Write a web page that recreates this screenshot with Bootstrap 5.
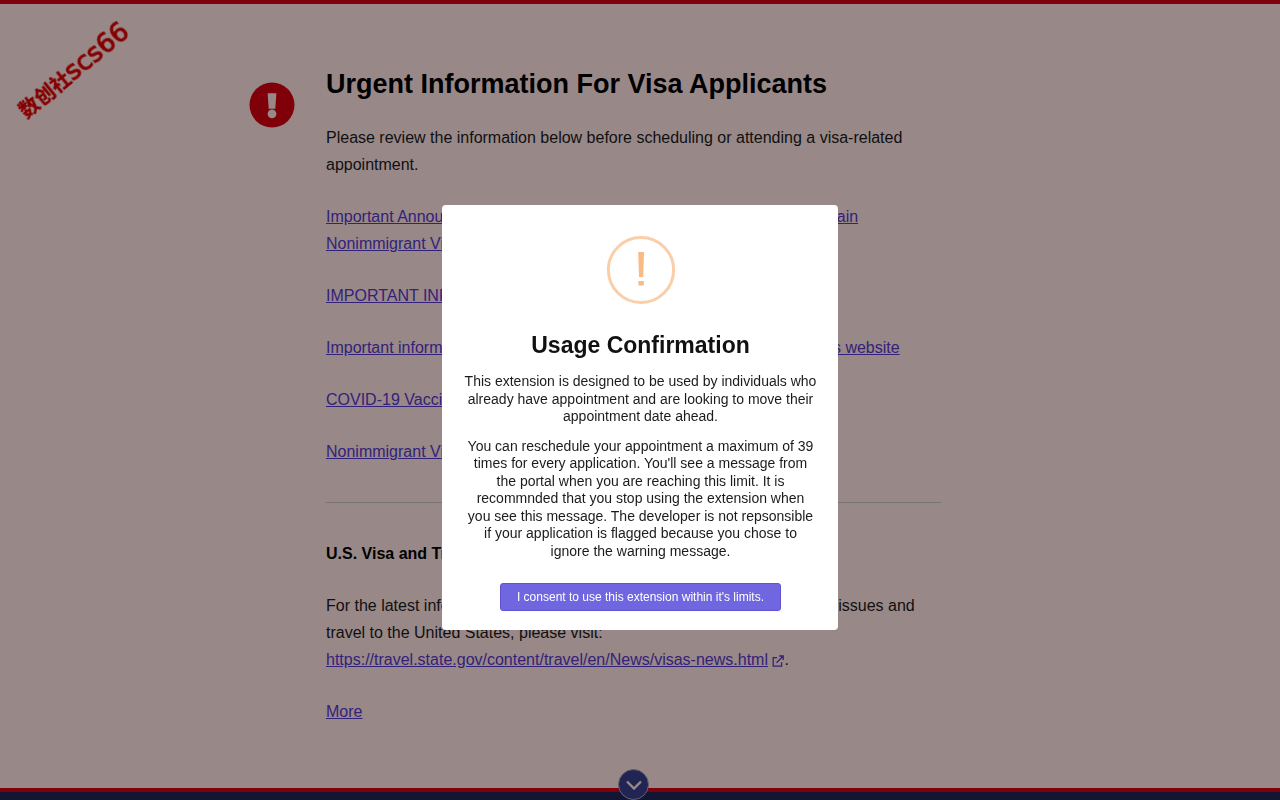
<!DOCTYPE html>
<html lang="en">
<head>
<meta charset="utf-8">
<meta name="viewport" content="width=device-width, initial-scale=1">
<title>Urgent Information For Visa Applicants</title>
<link href="https://cdn.jsdelivr.net/npm/bootstrap@5.3.0/dist/css/bootstrap.min.css" rel="stylesheet">
<style>
  body { font-family: "Liberation Sans", Arial, sans-serif; font-size: 16px; line-height: 27px; color: #1b1b1b; }
  .alert-panel { background: #ffe3e3; border-top: 4px solid #d50012; border-bottom: 4px solid #d50012; padding: 60px 13px 0 0; }
  .alert-inner { display: grid; grid-template-columns: 46px minmax(0, 615px); column-gap: 31px; justify-content: center; padding-right: 77px; }
  .alert-inner h1 { font-size: 27px; line-height: 40px; font-weight: 700; color: #000; margin-bottom: 20px; }
  .alert-inner p { margin-bottom: 25px; }
  .alert-inner a { color: #5638cc; }
  .alert-mark { margin-top: 18px; }
  .notice-rule { margin: 37px 0 37px; border-top: 1px solid #c6bfc4; opacity: 1; }
  .page-foot { background: #1f2558; height: 8px; }
  .foot-bar { padding-right: 13px; }
  .scroll-btn { width: 31px; height: 31px; top: -23px; background: #383f8c; border: 1px solid #a9a2b4; }
  .modal-backdrop { --bs-backdrop-opacity: .4; }
  .confirm-dialog { --bs-modal-width: 396px; margin-top: 205px; line-height: 1.25; }
  .confirm-box { border: 0; border-radius: 4px; padding: 30px 21px 19px 22px; color: #1b1b1b; font-size: 14px; }
  .confirm-box h2 { font-size: 23px; line-height: 30px; font-weight: 700; color: #111; margin: 25px 0 13px; }
  .confirm-box p { margin-bottom: 12px; }
  .consent-btn { font-size: 12px; line-height: 18px; padding: 4px 16px; color: #fff; background: #7066e0; border: 1px solid #6054d6; border-radius: 3px; margin-top: 11px; }
  .consent-btn:hover { background: #6054d6; color: #fff; }
  .stamp { top: 56px; left: 6px; z-index: 1060; color: #850000; font: 900 20px/28px "Noto Sans CJK SC", sans-serif; transform: rotate(-39deg); white-space: nowrap; }
  .stamp-code { font: 400 26px/28px "DejaVu Sans", sans-serif; -webkit-text-stroke: 1px #850000; }
</style>
</head>
<body class="vh-100 d-flex flex-column overflow-hidden">
  <main class="alert-panel flex-grow-1 overflow-hidden">
    <div class="alert-inner">
      <svg class="alert-mark" width="46" height="46" viewBox="0 0 46 46" aria-hidden="true">
        <circle cx="23" cy="23" r="22.5" fill="#d50012"/>
        <path d="M18.6 11.2h8.8l-1.1 15.6h-6.6z" fill="#ffe3e3"/>
        <circle cx="23" cy="31.8" r="4.4" fill="#ffe3e3"/>
      </svg>
      <div>
        <h1>Urgent Information For Visa Applicants</h1>
        <p>Please review the information below before scheduling or attending a visa-related appointment.</p>
        <p><a href="#">Important Announcement on Waivers of Interview Requirements for Certain Nonimmigrant Visas</a></p>
        <p><a href="#">IMPORTANT INFORMATION ON VISA FEES</a></p>
        <p><a href="#">Important information for visa applicants on the use of new appointments website</a></p>
        <p><a href="#">COVID-19 Vaccine Requirements</a></p>
        <p><a href="#">Nonimmigrant Visa Services</a></p>
        <hr class="notice-rule">
        <p><strong class="text-black">U.S. Visa and Travel Information</strong></p>
        <p>For the latest information on visas, COVID-19 related restrictions, policy issues and travel to the United States, please visit:<br>
          <a href="#">https://travel.state.gov/content/travel/en/News/visas-news.html</a>
          <svg width="12" height="12" viewBox="0 0 12 12" fill="none" stroke="#5638cc" stroke-width="1.3" aria-hidden="true"><path d="M5 2.7H1.2v8.5h8.4V7.3M7.2 1h4v4M11 1.2 4.5 7.7"/></svg>.</p>
        <p><a href="#">More</a></p>
      </div>
    </div>
  </main>
  <footer class="page-foot flex-shrink-0">
    <div class="foot-bar d-flex justify-content-center">
      <button type="button" class="scroll-btn position-relative flex-shrink-0 rounded-circle p-0 d-flex align-items-center justify-content-center" aria-label="Scroll down">
        <svg width="16" height="10" viewBox="0 0 16 10" fill="none" stroke="#ffe3e3" stroke-width="2.4" aria-hidden="true"><path d="m1 1.5 7 7 7-7"/></svg>
      </button>
    </div>
  </footer>

  <div class="modal-backdrop show"></div>
  <div class="modal d-block" tabindex="-1" role="dialog" aria-modal="true" aria-labelledby="confirm-title">
    <div class="modal-dialog confirm-dialog">
      <div class="modal-content confirm-box text-center align-items-center">
        <svg width="70" height="70" viewBox="0 0 70 70" aria-hidden="true">
          <circle cx="35" cy="35" r="32.6" fill="none" stroke="#facea8" stroke-width="3"/>
          <path d="M32.2 17h5.8l-.8 25h-4.2zM32.4 46h5.4v4.6h-5.4z" fill="#f8bb86"/>
        </svg>
        <h2 id="confirm-title">Usage Confirmation</h2>
        <p>This extension is designed to be used by individuals who already have appointment and are looking to move their appointment date ahead.</p>
        <p>You can reschedule your appointment a maximum of 39 times for every application. You'll see a message from the portal when you are reaching this limit. It is recommnded that you stop using the extension when you see this message. The developer is not repsonsible if your application is flagged because you chose to ignore the warning message.</p>
        <button type="button" class="btn consent-btn">I consent to use this extension within it's limits.</button>
      </div>
    </div>
  </div>
  <div class="stamp position-absolute" lang="zh-CN">数创社<span class="stamp-code">scs66</span></div>
  <script src="https://cdn.jsdelivr.net/npm/bootstrap@5.3.0/dist/js/bootstrap.bundle.min.js"></script>
</body>
</html>
